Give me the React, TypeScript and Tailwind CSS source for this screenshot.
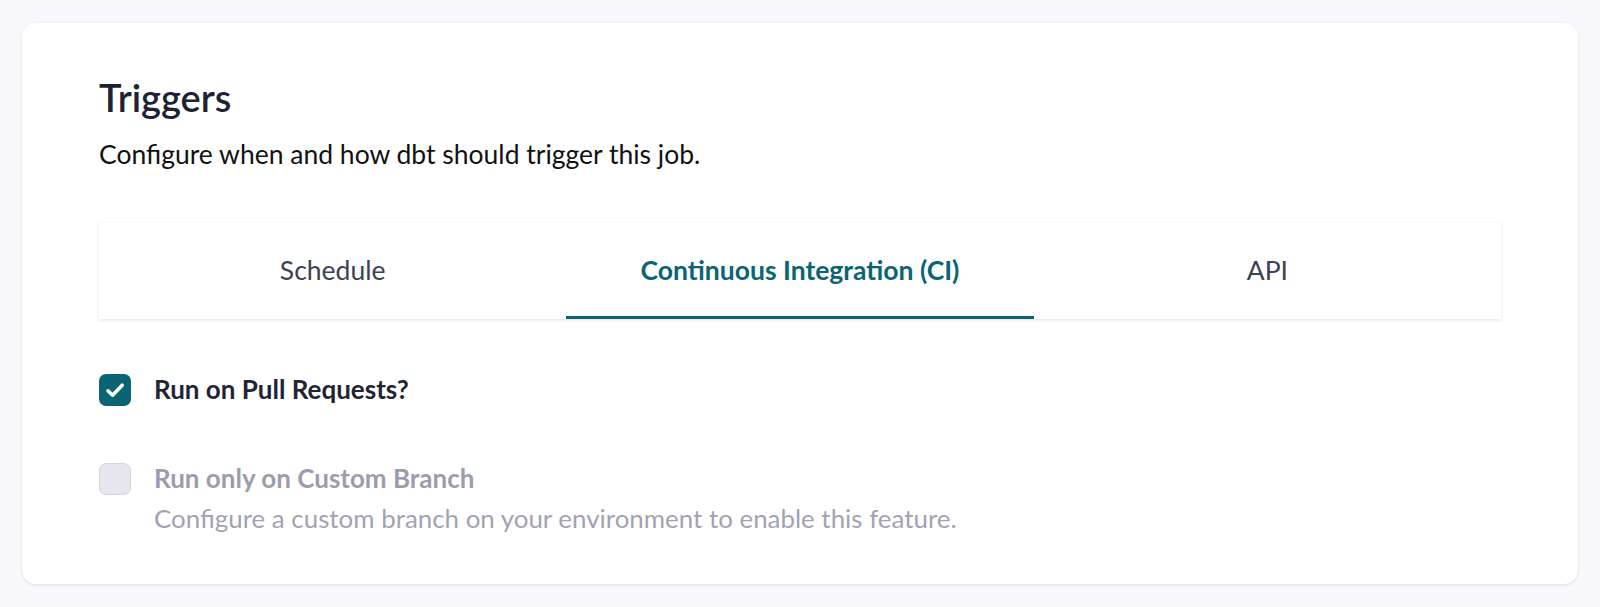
import { useState } from 'react';

const tabs = ['Schedule', 'Continuous Integration (CI)', 'API'];

function CheckIcon() {
  return (
    <svg viewBox="0 0 32 32" className="h-[32px] w-[32px]" fill="none">
      <path d="M9 16.8l4.6 4.4L23.2 11.2" stroke="white" strokeWidth="3.6" strokeLinecap="round" strokeLinejoin="round" />
    </svg>
  );
}

export default function App() {
  const [active, setActive] = useState(1);
  const [pullRequests, setPullRequests] = useState(true);

  return (
    <div className="min-h-screen bg-[#f9f8fc] px-[22px] pt-[23px]" style={{ fontFamily: 'Lato, "Noto Sans", sans-serif' }}>
      <div className="h-[561px] rounded-[14px] bg-white px-[77px] pt-[50px] shadow-[0_1px_3px_rgba(30,30,60,0.12)]">
        <h1 className="text-[38px] leading-[48px] font-semibold text-[#1c2434]">Triggers</h1>
        <p className="mt-[16px] text-[26.5px] leading-[34px] text-[#111]">Configure when and how dbt should trigger this job.</p>

        {/* tab bar */}
        <div className="mt-[52px] grid h-[96px] grid-cols-3 bg-white shadow-[0_1px_3px_rgba(30,30,60,0.15)]">
          {tabs.map((t, i) => (
            <button
              key={t}
              onClick={() => setActive(i)}
              className={
                i === active
                  ? 'flex items-center justify-center border-b-[3px] border-[#0b6474] pt-[3px] text-[26.5px] font-bold text-[#0b6474]'
                  : 'flex items-center justify-center border-b-[3px] border-transparent pt-[3px] text-[26.5px] text-[#3d4252]'
              }
            >
              {t}
            </button>
          ))}
        </div>

        {/* options */}
        <div className="mt-[51px] flex items-center gap-[23px]">
          <button
            onClick={() => setPullRequests(!pullRequests)}
            className={
              pullRequests
                ? 'flex h-[32px] w-[32px] items-center justify-center rounded-[7px] bg-[#0b6474]'
                : 'flex h-[32px] w-[32px] items-center justify-center rounded-[7px] border border-[#cfcfd8] bg-white'
            }
          >
            {pullRequests && <CheckIcon />}
          </button>
          <span className="text-[26px] font-bold text-[#1f2535]">Run on Pull Requests?</span>
        </div>

        <div className="mt-[52px] flex items-start gap-[23px]">
          <div className="mt-[2px] h-[32px] w-[32px] rounded-[7px] border border-[#d6d5df] bg-[#e7e6ee]" />
          <div>
            <div className="text-[26px] leading-[34px] font-bold text-[#9d9caf]">Run only on Custom Branch</div>
            <div className="mt-[6px] text-[25.9px] leading-[34px] text-[#a3a2b5]">
              Configure a custom branch on your environment to enable this feature.
            </div>
          </div>
        </div>
      </div>
    </div>
  );
}
